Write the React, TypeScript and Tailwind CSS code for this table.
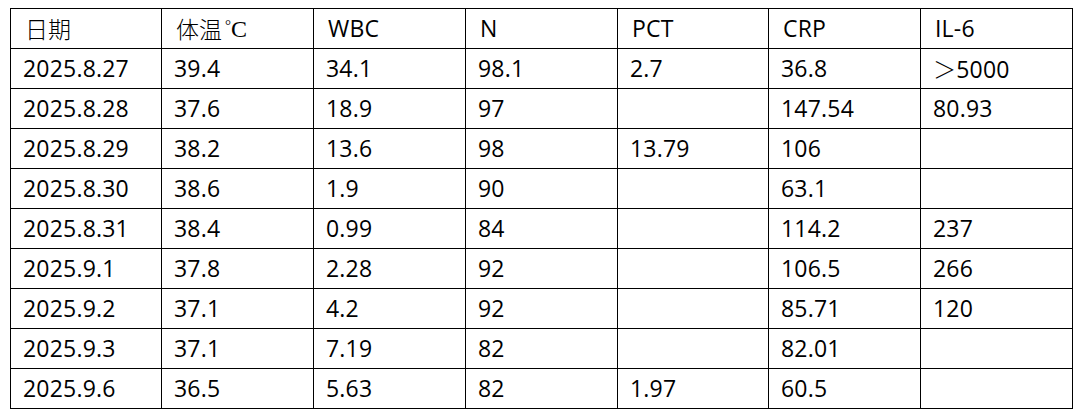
import React from 'react';

const headers = ['日期', '体温', 'WBC', 'N', 'PCT', 'CRP', 'IL-6'];

const rows: string[][] = [
  ['2025.8.27', '39.4', '34.1', '98.1', '2.7', '36.8', '＞5000'],
  ['2025.8.28', '37.6', '18.9', '97', '', '147.54', '80.93'],
  ['2025.8.29', '38.2', '13.6', '98', '13.79', '106', ''],
  ['2025.8.30', '38.6', '1.9', '90', '', '63.1', ''],
  ['2025.8.31', '38.4', '0.99', '84', '', '114.2', '237'],
  ['2025.9.1', '37.8', '2.28', '92', '', '106.5', '266'],
  ['2025.9.2', '37.1', '4.2', '92', '', '85.71', '120'],
  ['2025.9.3', '37.1', '7.19', '82', '', '82.01', ''],
  ['2025.9.6', '36.5', '5.63', '82', '1.97', '60.5', ''],
];

const latin = "font-['Open_Sans','Noto_Sans_CJK_SC',sans-serif] text-[23px] tracking-[0.2px]";
const cjk = "font-['Noto_Sans_CJK_SC',sans-serif] text-[23px] font-light";

export default function App() {
  return (
    <div className="w-[1078px] h-[415px] bg-white pl-[10px] pt-[8px]">
      <div className="inline-grid grid-cols-[150px_151px_151px_151px_150px_151px_151px] auto-rows-[39px] gap-px bg-black p-px text-black">
        {headers.map((h, i) => (
          <div key={h} className="bg-white flex items-center pl-[14px]">
            {i === 0 ? (
              <span className={cjk}>{h}</span>
            ) : i === 1 ? (
              <span className="flex items-center">
                <span className={cjk}>{h}</span>
                <span className="font-['Liberation_Serif',serif] text-[24px] leading-none ml-[3px]">
                  <span className="text-[15px] align-top relative top-[1px]">°</span>C
                </span>
              </span>
            ) : (
              <span className={latin}>{h}</span>
            )}
          </div>
        ))}
        {rows.map((r, ri) =>
          r.map((c, ci) => (
            <div key={`${ri}-${ci}`} className="bg-white flex items-center pl-[12px]">
              {c.startsWith('＞') ? (
                <span className={latin}>
                  <span className="font-['Noto_Sans_CJK_SC',sans-serif] font-light">＞</span>
                  {c.slice(1)}
                </span>
              ) : (
                <span className={latin}>{c}</span>
              )}
            </div>
          ))
        )}
      </div>
    </div>
  );
}
